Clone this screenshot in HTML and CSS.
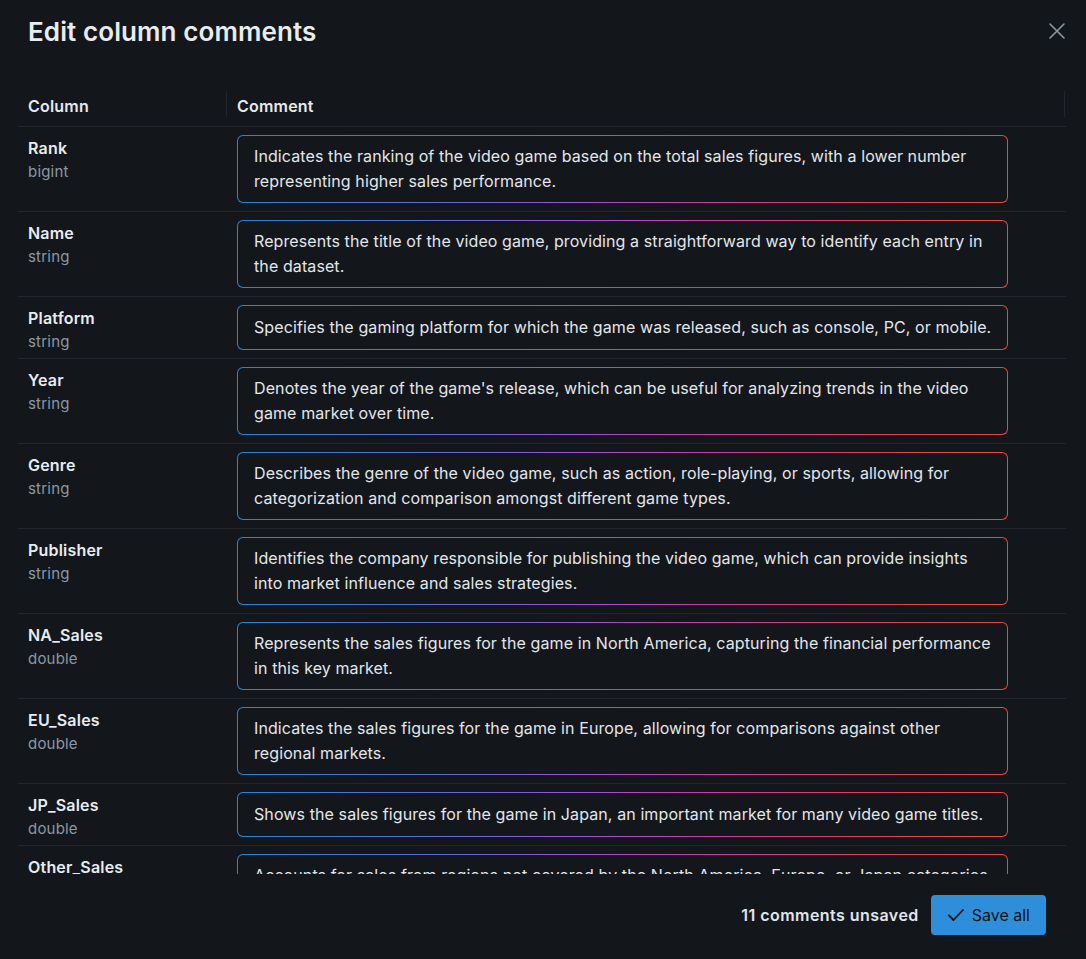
FILE: index.html
```html
<!DOCTYPE html>
<html lang="en">
<head>
    <meta charset="UTF-8">
    <meta name="viewport" content="width=device-width, initial-scale=1.0">
    <title>Edit column comments</title>
    <link rel="stylesheet" href="styles.css">
</head>
<body>

    <div class="dialog">
        <div class="dialog-header">
            <h1>Edit column comments</h1>
            <button class="close-btn" aria-label="Close">
                <svg width="18" height="18" viewBox="0 0 18 18"><path d="M2 2L16 16M16 2L2 16" stroke="#8b98a5" stroke-width="1.6" stroke-linecap="round"/></svg>
            </button>
        </div>

        <div class="table-wrap">
            <table class="comments">
                <thead>
                    <tr>
                        <th class="col-name">Column</th>
                        <th class="col-comment">Comment</th>
                    </tr>
                </thead>
                <tbody>
                    <tr>
                        <td class="col-name"><div class="name">Rank</div><div class="type">bigint</div></td>
                        <td class="col-comment"><textarea class="comment-box" rows="2">Indicates the ranking of the video game based on the total sales figures, with a lower number representing higher sales performance.</textarea></td>
                    </tr>
                    <tr>
                        <td class="col-name"><div class="name">Name</div><div class="type">string</div></td>
                        <td class="col-comment"><textarea class="comment-box" rows="2">Represents the title of the video game, providing a straightforward way to identify each entry in the dataset.</textarea></td>
                    </tr>
                    <tr>
                        <td class="col-name"><div class="name">Platform</div><div class="type">string</div></td>
                        <td class="col-comment"><textarea class="comment-box single" rows="1">Specifies the gaming platform for which the game was released, such as console, PC, or mobile.</textarea></td>
                    </tr>
                    <tr>
                        <td class="col-name"><div class="name">Year</div><div class="type">string</div></td>
                        <td class="col-comment"><textarea class="comment-box" rows="2">Denotes the year of the game's release, which can be useful for analyzing trends in the video game market over time.</textarea></td>
                    </tr>
                    <tr>
                        <td class="col-name"><div class="name">Genre</div><div class="type">string</div></td>
                        <td class="col-comment"><textarea class="comment-box" rows="2">Describes the genre of the video game, such as action, role-playing, or sports, allowing for categorization and comparison amongst different game types.</textarea></td>
                    </tr>
                    <tr>
                        <td class="col-name"><div class="name">Publisher</div><div class="type">string</div></td>
                        <td class="col-comment"><textarea class="comment-box" rows="2">Identifies the company responsible for publishing the video game, which can provide insights into market influence and sales strategies.</textarea></td>
                    </tr>
                    <tr>
                        <td class="col-name"><div class="name">NA_Sales</div><div class="type">double</div></td>
                        <td class="col-comment"><textarea class="comment-box" rows="2">Represents the sales figures for the game in North America, capturing the financial performance in this key market.</textarea></td>
                    </tr>
                    <tr>
                        <td class="col-name"><div class="name">EU_Sales</div><div class="type">double</div></td>
                        <td class="col-comment"><textarea class="comment-box" rows="2">Indicates the sales figures for the game in Europe, allowing for comparisons against other regional markets.</textarea></td>
                    </tr>
                    <tr>
                        <td class="col-name"><div class="name">JP_Sales</div><div class="type">double</div></td>
                        <td class="col-comment"><textarea class="comment-box single" rows="1">Shows the sales figures for the game in Japan, an important market for many video game titles.</textarea></td>
                    </tr>
                    <tr>
                        <td class="col-name"><div class="name">Other_Sales</div><div class="type">double</div></td>
                        <td class="col-comment"><textarea class="comment-box" rows="2">Accounts for sales from regions not covered by the North America, Europe, or Japan categories.</textarea></td>
                    </tr>
                </tbody>
            </table>
        </div>

        <div class="dialog-footer">
            <span class="unsaved">11 comments unsaved</span>
            <button class="save-btn">
                <svg width="18" height="18" viewBox="0 0 18 18"><path d="M2 9.5L6.5 14L16 4" fill="none" stroke="#0f1419" stroke-width="1.8" stroke-linecap="round" stroke-linejoin="round"/></svg>
                Save all
            </button>
        </div>
    </div>

</body>
</html>
```

FILE: styles.css
```css
body {
    font-family: Inter, "Noto Sans", sans-serif;
    margin: 0;
    padding: 0;
    background-color: #13171c;
    color: #e6e9ed;
}

.dialog {
    width: 1086px;
    height: 959px;
    display: flex;
    flex-direction: column;
}

.dialog-header {
    display: flex;
    justify-content: space-between;
    align-items: center;
    padding: 14px 20px 0 28px;
    height: 34px;
}

h1 {
    margin: 0;
    font-size: 26px;
    font-weight: 600;
    letter-spacing: 0.1px;
    color: #e9ecef;
}

.close-btn {
    background: none;
    border: none;
    padding: 0;
    width: 18px;
    height: 18px;
    cursor: pointer;
}

.table-wrap {
    margin: 37px 20px 0 18px;
    height: 789px;
    overflow: hidden;
}

.comments {
    width: 100%;
    border-collapse: collapse;
}

th {
    text-align: left;
    font-size: 16px;
    font-weight: 600;
    letter-spacing: 0.2px;
    height: 41px;
    padding: 0 10px;
    border-bottom: 1px solid #22272e;
    position: relative;
}

th.col-comment {
    padding-left: 11px;
}

th.col-comment::before,
th.col-comment::after {
    content: "";
    position: absolute;
    top: 6px;
    bottom: 9px;
    width: 1px;
    background: #22272e;
}

th.col-comment::before {
    left: 0;
}

th.col-comment::after {
    right: 1px;
}

td {
    vertical-align: top;
    border-bottom: 1px solid #22272e;
}

td.col-name {
    width: 188px;
    padding: 11px 10px 0 10px;
}

td.col-comment {
    padding: 8px 11px 8px 11px;
}

.name {
    font-size: 16px;
    font-weight: 600;
    line-height: 21px;
    letter-spacing: 0.2px;
    color: #e9ecef;
}

.type {
    margin-top: 2px;
    font-size: 15px;
    line-height: 22px;
    letter-spacing: 0.2px;
    color: #8b97a3;
}

.comment-box {
    display: block;
    box-sizing: border-box;
    width: 771px;
    padding: 8px 12px 8px 16px;
    font-family: inherit;
    font-size: 16px;
    line-height: 25px;
    letter-spacing: 0.1px;
    color: #e3e6ea;
    border: 1.5px solid transparent;
    border-radius: 6px;
    background:
        linear-gradient(#13171c, #13171c) padding-box,
        linear-gradient(90deg, #2a86d2 0%, #5a6fd6 25%, #9e4fd4 45%, #c9409e 62%, #dd4160 80%, #e8483a 100%) border-box;
    resize: none;
    overflow: hidden;
    outline: none;
}

.comment-box.single {
    height: 45px;
    padding-top: 9px;
}

.dialog-footer {
    display: flex;
    justify-content: flex-end;
    align-items: center;
    gap: 12px;
    padding: 21px 40px 0 0;
}

.unsaved {
    font-size: 16px;
    font-weight: 600;
    letter-spacing: 0.45px;
    color: #e2e5e9;
}

.save-btn {
    display: flex;
    align-items: center;
    gap: 7px;
    height: 40px;
    padding: 0 16px 0 16px;
    background-color: #2e8ed9;
    border: none;
    border-radius: 4px;
    font-family: inherit;
    font-size: 16px;
    color: #0f1419;
    cursor: pointer;
}
```
